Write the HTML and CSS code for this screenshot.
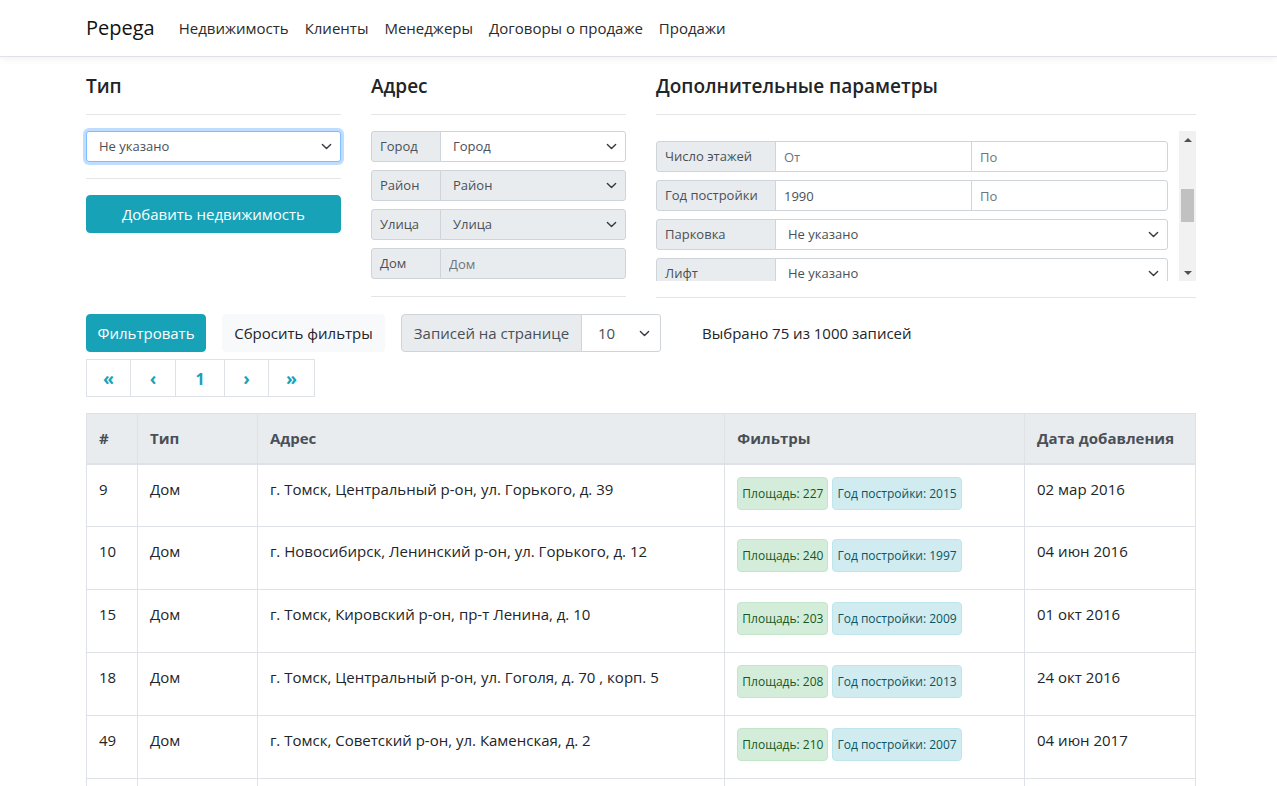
FILE: index.html
```html
<!DOCTYPE html>
<html lang="ru">
<head>
<meta charset="utf-8">
<title>Pepega</title>
<link rel="stylesheet" href="styles.css">
</head>
<body>
<nav class="navbar">
  <div class="navbar-inner">
    <a class="brand" href="#">Pepega</a>
    <ul class="nav-links">
      <li><a href="#">Недвижимость</a></li>
      <li><a href="#">Клиенты</a></li>
      <li><a href="#">Менеджеры</a></li>
      <li><a href="#">Договоры о продаже</a></li>
      <li><a href="#">Продажи</a></li>
    </ul>
  </div>
</nav>

<main class="container">
  <div class="filters">
    <section class="col">
      <h5 class="col-title">Тип</h5>
      <hr class="sep">
      <select class="select select-focus"><option>Не указано</option></select>
      <hr class="sep">
      <button class="btn btn-info btn-block">Добавить недвижимость</button>
    </section>

    <section class="col">
      <h5 class="col-title">Адрес</h5>
      <hr class="sep">
      <div class="igroup igroup-addr">
        <span class="ilabel">Город</span>
        <select class="select"><option>Город</option></select>
      </div>
      <div class="igroup igroup-addr">
        <span class="ilabel">Район</span>
        <select class="select" disabled><option>Район</option></select>
      </div>
      <div class="igroup igroup-addr">
        <span class="ilabel">Улица</span>
        <select class="select" disabled><option>Улица</option></select>
      </div>
      <div class="igroup igroup-addr last">
        <span class="ilabel">Дом</span>
        <input class="input" placeholder="Дом" disabled>
      </div>
      <hr class="sep sep-end">
    </section>

    <section class="col">
      <h5 class="col-title">Дополнительные параметры</h5>
      <hr class="sep">
      <div class="scroll-wrap">
        <div class="scroller" id="extra">
          <div class="igroup igroup-extra">
            <span class="ilabel">Площадь</span>
            <input class="input" placeholder="От"><input class="input" placeholder="По">
          </div>
          <div class="igroup igroup-extra">
            <span class="ilabel">Число комнат</span>
            <input class="input" placeholder="От"><input class="input" placeholder="По">
          </div>
          <div class="igroup igroup-extra">
            <span class="ilabel">Этаж</span>
            <input class="input" placeholder="От"><input class="input" placeholder="По">
          </div>
          <div class="igroup igroup-extra">
            <span class="ilabel">Тип дома</span>
            <select class="select"><option>Не указано</option></select>
          </div>
          <div class="sub-label">.. ..</div>
          <div class="igroup igroup-extra" id="floors">
            <span class="ilabel">Число этажей</span>
            <input class="input" placeholder="От"><input class="input" placeholder="По">
          </div>
          <div class="igroup igroup-extra">
            <span class="ilabel">Год постройки</span>
            <input class="input" value="1990"><input class="input" placeholder="По">
          </div>
          <div class="igroup igroup-extra">
            <span class="ilabel">Парковка</span>
            <select class="select"><option>Не указано</option></select>
          </div>
          <div class="igroup igroup-extra">
            <span class="ilabel">Лифт</span>
            <select class="select"><option>Не указано</option></select>
          </div>
          <div class="igroup igroup-extra">
            <span class="ilabel">Балкон</span>
            <select class="select"><option>Не указано</option></select>
          </div>
          <div class="igroup igroup-extra">
            <span class="ilabel">Мусоропровод</span>
            <select class="select"><option>Не указано</option></select>
          </div>
          <div class="igroup igroup-extra">
            <span class="ilabel">Охрана</span>
            <select class="select"><option>Не указано</option></select>
          </div>
          <div class="igroup igroup-extra last">
            <span class="ilabel">Ремонт</span>
            <select class="select"><option>Не указано</option></select>
          </div>
        </div>
        <div class="fake-bar" aria-hidden="true">
          <span class="bar-btn bar-up"></span>
          <span class="bar-track"><span class="bar-thumb"></span></span>
          <span class="bar-btn bar-down"></span>
        </div>
      </div>
      <hr class="sep sep-end">
    </section>
  </div>

  <div class="toolbar">
    <button class="btn btn-info">Фильтровать</button>
    <button class="btn btn-light">Сбросить фильтры</button>
    <div class="igroup igroup-md">
      <span class="ilabel">Записей на странице</span>
      <select class="select select-md"><option>10</option></select>
    </div>
    <span class="count">Выбрано 75 из 1000 записей</span>
  </div>

  <ul class="pager">
    <li class="p-first"><a href="#">«</a></li>
    <li class="p-prev"><a href="#">‹</a></li>
    <li class="p-num"><a href="#">1</a></li>
    <li class="p-next"><a href="#">›</a></li>
    <li class="p-last"><a href="#">»</a></li>
  </ul>

  <table class="table">
    <colgroup>
      <col class="c-id"><col class="c-type"><col class="c-addr"><col class="c-filters"><col class="c-date">
    </colgroup>
    <thead>
      <tr><th>#</th><th>Тип</th><th>Адрес</th><th>Фильтры</th><th>Дата добавления</th></tr>
    </thead>
    <tbody>
      <tr>
        <td>9</td><td>Дом</td><td>г. Томск, Центральный р-он, ул. Горького, д. 39</td>
        <td><span class="tag tag-green">Площадь: 227</span><span class="tag tag-blue">Год постройки: 2015</span></td>
        <td>02 мар 2016</td>
      </tr>
      <tr>
        <td>10</td><td>Дом</td><td>г. Новосибирск, Ленинский р-он, ул. Горького, д. 12</td>
        <td><span class="tag tag-green">Площадь: 240</span><span class="tag tag-blue">Год постройки: 1997</span></td>
        <td>04 июн 2016</td>
      </tr>
      <tr>
        <td>15</td><td>Дом</td><td>г. Томск, Кировский р-он, пр-т Ленина, д. 10</td>
        <td><span class="tag tag-green">Площадь: 203</span><span class="tag tag-blue">Год постройки: 2009</span></td>
        <td>01 окт 2016</td>
      </tr>
      <tr>
        <td>18</td><td>Дом</td><td>г. Томск, Центральный р-он, ул. Гоголя, д. 70 , корп. 5</td>
        <td><span class="tag tag-green">Площадь: 208</span><span class="tag tag-blue">Год постройки: 2013</span></td>
        <td>24 окт 2016</td>
      </tr>
      <tr>
        <td>49</td><td>Дом</td><td>г. Томск, Советский р-он, ул. Каменская, д. 2</td>
        <td><span class="tag tag-green">Площадь: 210</span><span class="tag tag-blue">Год постройки: 2007</span></td>
        <td>04 июн 2017</td>
      </tr>
      <tr>
        <td>52</td><td>Дом</td><td>г. Томск, Ленинский р-он, ул. Гоголя, д. 5</td>
        <td><span class="tag tag-green">Площадь: 198</span><span class="tag tag-blue">Год постройки: 2001</span></td>
        <td>12 авг 2017</td>
      </tr>
    </tbody>
  </table>
</main>
<script src="script.js"></script>
</body>
</html>
```

FILE: script.js
```js
(function () {
  var box = document.getElementById('extra');
  var row = document.getElementById('floors');
  if (box && row) {
    box.scrollTop = row.offsetTop - box.offsetTop - 10;
  }
})();
```

FILE: styles.css
```css
* { box-sizing: border-box; }

html, body {
  margin: 0;
  padding: 0;
}

body {
  font-family: "Open Sans", "Noto Sans", sans-serif;
  font-size: 16px;
  line-height: 1.5;
  color: #212529;
  background: #fff;
  overflow: hidden;
}

a { text-decoration: none; }

/* ---------- navbar ---------- */
.navbar {
  height: 57px;
  background: #fff;
  border-bottom: 1px solid #dfe2e6;
  box-shadow: 0 2px 8px rgba(0, 0, 0, 0.06);
}

.navbar-inner {
  width: 1110px;
  margin-left: 86px;
  height: 56px;
  display: flex;
  align-items: center;
}

.brand {
  font-size: 20px;
  color: #111;
  margin-right: 16px;
  line-height: 30px;
}

.nav-links {
  list-style: none;
  margin: 0;
  padding: 0;
  display: flex;
}

.nav-links a {
  display: block;
  padding: 8px 8px;
  font-size: 15px;
  color: #2b2b2b;
}

/* ---------- layout ---------- */
.container {
  width: 1110px;
  margin-left: 86px;
  padding-top: 17px;
}

.filters {
  display: grid;
  grid-template-columns: 255px 255px 540px;
  column-gap: 30px;
}

.col-title {
  margin: 0;
  font-size: 19px;
  font-weight: 600;
  line-height: 24px;
  color: #212529;
}

.sep {
  border: 0;
  border-top: 1px solid rgba(0, 0, 0, 0.1);
  margin: 16px 0;
}

.sep-end { margin: 16px 0 16px; }
.igroup-addr.last + .sep-end { margin-top: 17px; }

/* ---------- form controls ---------- */
.select,
.input {
  display: block;
  width: 100%;
  height: 31px;
  font-family: inherit;
  font-size: 13px;
  line-height: 1.5;
  color: #495057;
  background-color: #fff;
  border: 1px solid #ced4da;
  border-radius: 3px;
  padding: 4px 8px;
  margin: 0;
  outline: none;
}

.select {
  -webkit-appearance: none;
  appearance: none;
  padding-left: 12px;
  padding-right: 28px;
  background-image: url("data:image/svg+xml,%3csvg xmlns='http://www.w3.org/2000/svg' width='16' height='16' viewBox='0 0 16 16'%3e%3cpath fill='none' stroke='%23343a40' stroke-linecap='round' stroke-linejoin='round' stroke-width='2' d='M2 5l6 6 6-6'/%3e%3c/svg%3e");
  background-repeat: no-repeat;
  background-position: right 8px center;
  background-size: 11px 11px;
}

.select:disabled,
.input:disabled {
  background-color: #e9ecef;
  color: #495057;
  opacity: 1;
}

.input::placeholder { color: #6c757d; }

.select-focus {
  border-color: #80bdff;
  box-shadow: 0 0 0 3px rgba(0, 123, 255, 0.25);
}

.igroup {
  display: flex;
  align-items: stretch;
  margin-bottom: 8px;
}

.igroup.last { margin-bottom: 0; }

.ilabel {
  display: flex;
  align-items: center;
  flex: none;
  padding: 4px 8px;
  font-size: 13px;
  color: #495057;
  background: #e9ecef;
  border: 1px solid #ced4da;
  border-radius: 3px 0 0 3px;
  white-space: nowrap;
}

.igroup .select,
.igroup .input {
  flex: 1 1 0;
  width: auto;
  min-width: 0;
  border-radius: 0;
  margin-left: -1px;
}

.igroup .select:last-child,
.igroup .input:last-child {
  border-radius: 0 3px 3px 0;
}

.igroup-addr .ilabel { width: 70px; }
.igroup-extra .ilabel { width: 120px; }

/* ---------- scroll box with scrollbar ---------- */
.scroll-wrap {
  display: flex;
  height: 150px;
}

.scroller {
  flex: 1 1 auto;
  min-width: 0;
  overflow-y: scroll;
  padding-right: 11px;
  scrollbar-width: none;
}

.scroller::-webkit-scrollbar { display: none; width: 0; }

.fake-bar {
  flex: none;
  width: 17px;
  display: flex;
  flex-direction: column;
  background: #f1f1f1;
}

.bar-btn {
  flex: none;
  height: 17px;
  display: flex;
  align-items: center;
  justify-content: center;
}

.bar-btn::before {
  content: "";
  width: 0;
  height: 0;
  border-left: 4px solid transparent;
  border-right: 4px solid transparent;
}

.bar-up::before { border-bottom: 4px solid #505050; }
.bar-down::before { border-top: 4px solid #505050; }

.bar-track {
  flex: 1 1 auto;
  padding-top: 41px;
}

.bar-thumb {
  display: block;
  height: 33px;
  margin: 0 2px;
  background: #c1c1c1;
}

.sub-label {
  font-size: 14px;
  line-height: 14px;
  height: 11px;
  letter-spacing: 2px;
  color: #1d4e89;
  margin: 6px 0 12px 11px;
  overflow: hidden;
}

/* ---------- buttons ---------- */
.btn {
  display: inline-block;
  font-family: inherit;
  font-size: 15px;
  line-height: 24px;
  padding: 6px 12px;
  border: 1px solid transparent;
  border-radius: 4px;
  cursor: pointer;
  height: 38px;
}

.btn-info {
  background: #17a2b8;
  border-color: #17a2b8;
  color: #fff;
}

.btn-light {
  background: #f8f9fa;
  border-color: #f8f9fa;
  color: #212529;
}

.btn-block { display: block; width: 100%; }

/* ---------- toolbar ---------- */
.toolbar {
  display: flex;
  align-items: center;
}

.toolbar .btn-info { width: 120px; padding: 6px 0; }
.toolbar .btn-light { width: 163px; margin-left: 16px; padding: 6px 0; }

.igroup-md {
  margin: 0 0 0 16px;
  height: 38px;
}

.igroup-md .ilabel {
  width: 181px;
  padding: 6px 12px;
  font-size: 15px;
  border-radius: 4px 0 0 4px;
  justify-content: center;
}

.igroup-md .select-md {
  height: 38px;
  width: 80px;
  flex: none;
  font-size: 15px;
  padding-left: 16px;
  background-position: right 10px center;
  border-radius: 0 4px 4px 0;
}

.count {
  margin-left: 41px;
  font-size: 15px;
}

/* ---------- pagination ---------- */
.pager {
  list-style: none;
  margin: 7px 0 0;
  padding: 0;
  display: flex;
}

.pager li a {
  display: flex;
  align-items: center;
  justify-content: center;
  height: 38px;
  margin-left: -1px;
  border: 1px solid #dee2e6;
  background: #fff;
  color: #17a2b8;
  font-weight: 700;
  font-size: 18px;
  line-height: 20px;
}

.pager li:first-child a { margin-left: 0; }
.pager .p-first a { width: 45px; }
.pager .p-prev a { width: 46px; }
.pager .p-num a { width: 50px; font-size: 16px; padding-top: 2px; }
.pager .p-next a { width: 45px; }
.pager .p-last a { width: 47px; }

/* ---------- table ---------- */
.table {
  width: 1110px;
  margin-top: 16px;
  border-collapse: collapse;
  font-size: 15px;
}

.c-id { width: 51px; }
.c-type { width: 120px; }
.c-addr { width: 468px; }
.c-filters { width: 300px; }
.c-date { width: 171px; }

.table th,
.table td {
  border: 1px solid #dee2e6;
  padding: 12px;
  text-align: left;
  vertical-align: top;
  line-height: 24px;
}

.table thead th {
  background: #e9ecef;
  color: #495057;
  font-weight: 700;
  height: 50px;
  border-bottom-width: 2px;
  vertical-align: middle;
  padding-top: 10px;
  padding-bottom: 10px;
}

.table td { height: 63px; }

.table td:nth-child(4) { padding-bottom: 0; }

.tag {
  display: inline-block;
  font-size: 12px;
  line-height: 18px;
  padding: 7px 4px 6px;
  border: 1px solid;
  border-radius: 4px;
  margin-right: 4px;
  vertical-align: top;
}

.tag-green {
  background: #d4edda;
  border-color: #c3e6cb;
  color: #155724;
}

.tag-blue {
  background: #d1ecf1;
  border-color: #bee5eb;
  color: #0c5460;
}
```
